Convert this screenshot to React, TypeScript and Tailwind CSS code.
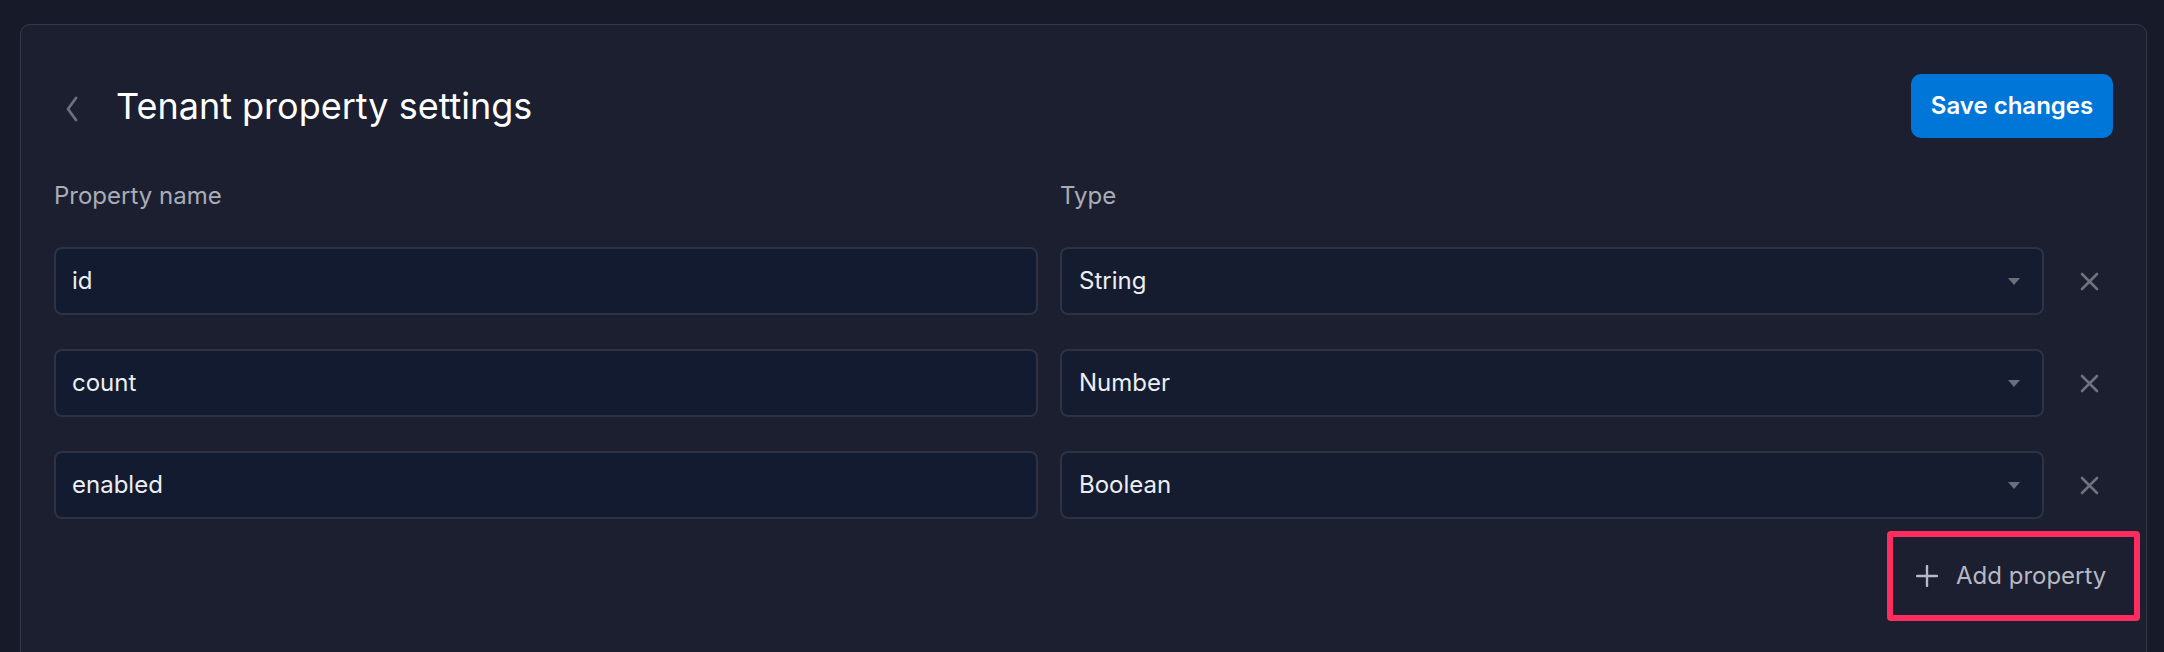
import { useState } from 'react';

type Row = { name: string; type: string };

const initialRows: Row[] = [
  { name: 'id', type: 'String' },
  { name: 'count', type: 'Number' },
  { name: 'enabled', type: 'Boolean' },
];

function ChevronLeft() {
  return (
    <svg width="14" height="26" viewBox="0 0 14 26" fill="none">
      <path d="M11 2 L3 13 L11 24" stroke="#6b6f80" strokeWidth="2.8" strokeLinecap="round" strokeLinejoin="round" />
    </svg>
  );
}

function CloseIcon() {
  return (
    <svg width="19" height="19" viewBox="0 0 19 19" fill="none">
      <path d="M2 2 L17 17 M17 2 L2 17" stroke="#6f7380" strokeWidth="2.6" strokeLinecap="round" />
    </svg>
  );
}

function PlusIcon() {
  return (
    <svg width="22" height="22" viewBox="0 0 22 22" fill="none">
      <path d="M11 1 V21 M1 11 H21" stroke="#b6b9c4" strokeWidth="2.4" strokeLinecap="round" />
    </svg>
  );
}

export default function App() {
  const [rows, setRows] = useState<Row[]>(initialRows);

  const removeRow = (i: number) => {
    setRows(rows.filter((_, idx) => idx !== i));
  };

  return (
    <div className="min-h-screen bg-[#171a28] pt-[24px] pl-[20px] pr-[17px] font-['Inter',sans-serif]">
      <div className="rounded-t-[10px] border border-[#353949] bg-[#1c1f2f] px-[33px] pt-[49px] pb-[40px]">
        {/* header */}
        <div className="flex h-[64px] items-center justify-between">
          <div className="flex items-center">
            <button className="ml-[11px] mr-[37px] mt-[6px] flex items-center">
              <ChevronLeft />
            </button>
            <h1 className="text-[36px] leading-[44px] font-normal text-white">Tenant property settings</h1>
          </div>
          <button className="h-[64px] w-[202px] rounded-[10px] bg-[#0077d8] text-[24px] font-semibold text-white">
            Save changes
          </button>
        </div>

        {/* column labels */}
        <div className="mt-[42px] grid grid-cols-[1fr_1fr_47px] gap-x-[22px] text-[24px] leading-[32px] text-[#a9adb8]">
          <span>Property name</span>
          <span>Type</span>
        </div>

        {/* rows */}
        <div className="mt-[35px] flex flex-col gap-[34px]">
          {rows.map((row, i) => (
            <div key={i} className="grid grid-cols-[1fr_1fr_47px] items-center gap-x-[22px]">
              <div className="flex h-[68px] items-center rounded-[8px] border-2 border-[#2c3344] bg-[#121b2f] px-[16px] text-[24px] text-[#eceef2]">
                {row.name}
              </div>
              <div className="flex h-[68px] items-center justify-between rounded-[8px] border-2 border-[#2c3344] bg-[#151c2f] pl-[17px] pr-[22px] text-[24px] text-[#eceef2]">
                <span>{row.type}</span>
                <svg width="12" height="7" viewBox="0 0 12 7">
                  <path d="M0 0 H12 L6 7 Z" fill="#6b6f7c" />
                </svg>
              </div>
              <button onClick={() => removeRow(i)} className="flex items-center justify-center">
                <CloseIcon />
              </button>
            </div>
          ))}
        </div>

        {/* add property */}
        <div className="mt-[12px] flex justify-end">
          <div className="mr-[-27px] flex h-[90px] w-[253px] items-center rounded-[4px] border-[6px] border-[#ff2d5f]">
            <button
              onClick={() => setRows([...rows, { name: '', type: 'String' }])}
              className="flex items-center pl-[23px] text-[24px] text-[#b6b9c4]"
            >
              <PlusIcon />
              <span className="ml-[18px]">Add property</span>
            </button>
          </div>
        </div>
      </div>
    </div>
  );
}
